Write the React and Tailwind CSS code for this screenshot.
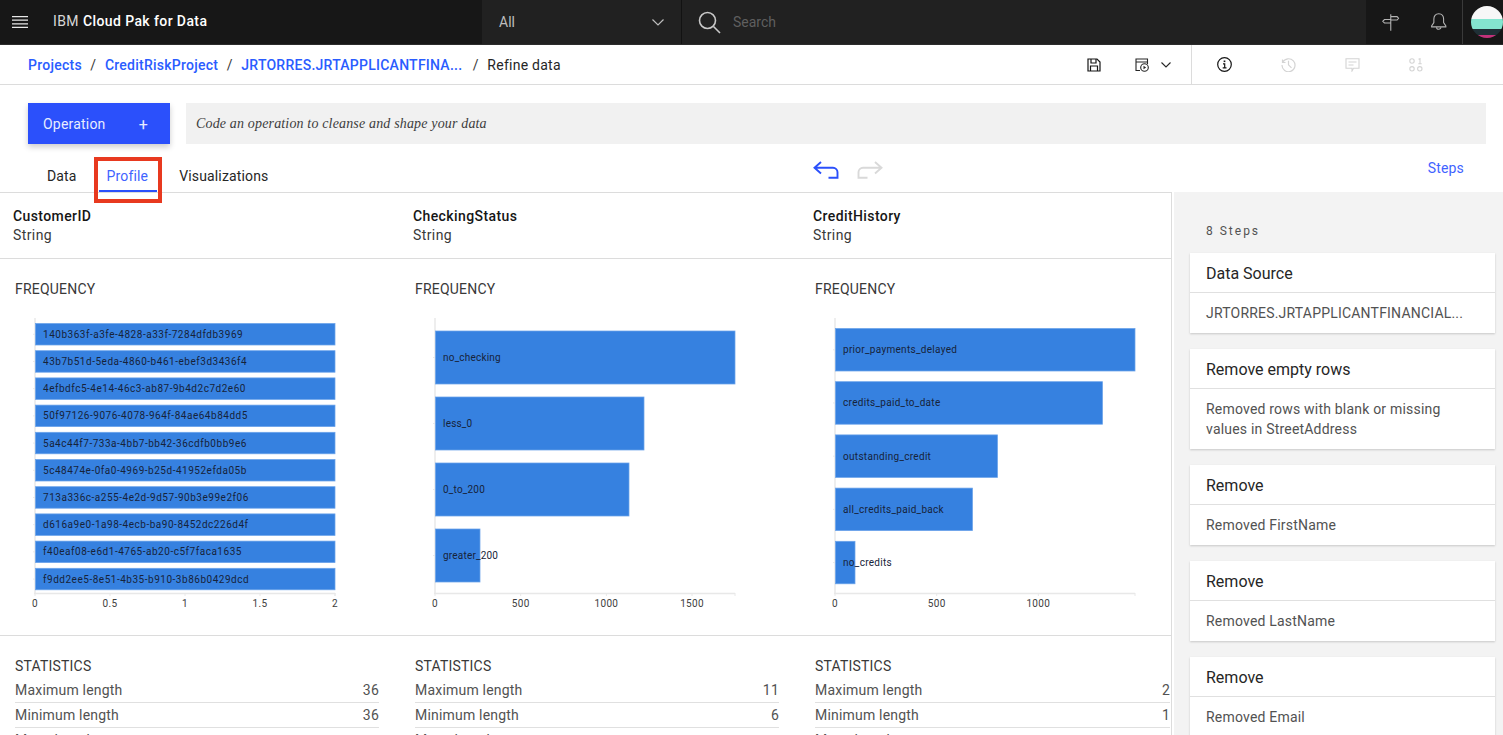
const frequencyCharts = [
  {
    name: 'CustomerID',
    ticks: [['0', 0], ['0.5', 75], ['1', 150], ['1.5', 225], ['2', 300]],
    bars: [
      ['140b363f-a3fe-4828-a33f-7284dfdb3969', 300],
      ['43b7b51d-5eda-4860-b461-ebef3d3436f4', 300],
      ['4efbdfc5-4e14-46c3-ab87-9b4d2c7d2e60', 300],
      ['50f97126-9076-4078-964f-84ae64b84dd5', 300],
      ['5a4c44f7-733a-4bb7-bb42-36cdfb0bb9e6', 300],
      ['5c48474e-0fa0-4969-b25d-41952efda05b', 300],
      ['713a336c-a255-4e2d-9d57-90b3e99e2f06', 300],
      ['d616a9e0-1a98-4ecb-ba90-8452dc226d4f', 300],
      ['f40eaf08-e6d1-4765-ab20-c5f7faca1635', 300],
      ['f9dd2ee5-8e51-4b35-b910-3b86b0429dcd', 300],
    ],
    top: 323.5,
    pitch: 27.2,
    barHeight: 21.5,
    labelSpacing: 0.52,
    stats: [36, 36],
  },
  {
    name: 'CheckingStatus',
    ticks: [['0', 0], ['500', 85.7], ['1000', 171.4], ['1500', 257]],
    bars: [
      ['no_checking', 300],
      ['less_0', 209],
      ['0_to_200', 194],
      ['greater_200', 45],
    ],
    top: 331,
    pitch: 66,
    barHeight: 53,
    labelSpacing: 0.2,
    stats: [11, 6],
  },
  {
    name: 'CreditHistory',
    ticks: [['0', 0], ['500', 101.7], ['1000', 203.3]],
    bars: [
      ['prior_payments_delayed', 300],
      ['credits_paid_to_date', 267.5],
      ['outstanding_credit', 162.5],
      ['all_credits_paid_back', 137.5],
      ['no_credits', 20],
    ],
    top: 328.5,
    pitch: 53.2,
    barHeight: 42.5,
    labelSpacing: 0.3,
    stats: [2, 1],
  },
];

const steps = [
  { title: 'Data Source', lines: ['JRTORRES.JRTAPPLICANTFINANCIAL...'] },
  { title: 'Remove empty rows', lines: ['Removed rows with blank or missing', 'values in StreetAddress'] },
  { title: 'Remove', lines: ['Removed FirstName'] },
  { title: 'Remove', lines: ['Removed LastName'] },
  { title: 'Remove', lines: ['Removed Email'] },
];

// svg sits at page y 310, so bar positions are page y minus this
const CHART_TOP = 310;

function BarChart({ chart }) {
  return (
    <svg width="400" height="305" className="block font-['Roboto',sans-serif]">
      <line x1="35" y1="8" x2="35" y2="283.5" stroke="#e8e8e8" strokeWidth="1.5" />
      <line x1="34" y1="283.5" x2="335" y2="283.5" stroke="#e8e8e8" strokeWidth="1.5" />
      {chart.bars.map(([label, width], i) => {
        const y = chart.top - CHART_TOP + i * chart.pitch;
        return (
          <g key={label}>
            <line x1="33" x2="35" y1={y + chart.barHeight / 2} y2={y + chart.barHeight / 2} stroke="#e8e8e8" />
            <rect x="35.5" y={y} width={width - 0.5} height={chart.barHeight} fill="#3681e0" stroke="#6ba3ea" strokeWidth="0.75" />
            <text x="43" y={y + chart.barHeight / 2 + 3.5} fontSize="10" letterSpacing={chart.labelSpacing} fill="#16233a">
              {label}
            </text>
          </g>
        );
      })}
      {chart.ticks.map(([label, x]) => (
        <g key={label}>
          <line x1={35 + x} x2={35 + x} y1="283" y2="286" stroke="#e8e8e8" />
          <text x={35 + x} y="296.5" fontSize="10" letterSpacing="0.3" textAnchor="middle" fill="#3d3d3d">
            {label}
          </text>
        </g>
      ))}
      <line x1="335" x2="335" y1="283" y2="286" stroke="#e8e8e8" />
    </svg>
  );
}

function StatRow({ label, value }) {
  return (
    <div className="flex h-[25px] items-center justify-between border-b border-[#e0e0e0] pt-px text-[14px] tracking-[0.2px] text-[#525252]">
      <span>{label}</span>
      <span>{value}</span>
    </div>
  );
}

function StepCard({ step }) {
  return (
    <div className="mb-4 w-[305px] bg-white shadow-[0_1px_2px_rgba(0,0,0,0.18)]">
      <div className="flex h-[40px] items-center border-b border-[#e0e0e0] px-4 pt-[2px] text-[16px] text-[#262626]">{step.title}</div>
      <div className="px-4 py-[10px] text-[14px] leading-[20px] tracking-[0.2px] text-[#525252]">
        {step.lines.map((line) => (
          <div key={line}>{line}</div>
        ))}
      </div>
    </div>
  );
}

function TopBar() {
  return (
    <header className="flex h-[45px] shrink-0 border-b border-[#2c2c2c] bg-[#212121] text-[14px]">
      <div className="flex w-[482px] items-center bg-[#171717]">
        <svg width="16" height="12" viewBox="0 0 16 12" className="ml-3" stroke="#e8e8e8" strokeWidth="1.2">
          <path d="M0 .6h16M0 4.2h16M0 7.8h16M0 11.4h16" />
        </svg>
        <span className="ml-[25px] -mt-px tracking-[0.4px] text-[#d8d8d8]">IBM</span>
        <span className="ml-1 -mt-px font-medium tracking-[0.4px] text-white">Cloud Pak for Data</span>
      </div>
      <div className="flex w-[200px] items-center justify-between border-r border-[#121212] pl-[17px] pr-[17px] text-[#bdbdbd]">
        <span>All</span>
        <svg width="12" height="7" viewBox="0 0 12 7" fill="none" stroke="#bdbdbd" strokeWidth="1.2">
          <path d="M.5.5 6 6l5.500-5.500" />
        </svg>
      </div>
      <div className="flex flex-1 items-center pl-4">
        <svg width="23" height="23" viewBox="0 0 23 23" fill="none" stroke="#c8c8c8" strokeWidth="1.6">
          <circle cx="9.500" cy="9.500" r="8" />
          <path d="m15.500 15.500 6.500 6.500" />
        </svg>
        <span className="ml-3 text-[#5f5f5f]">Search</span>
      </div>
      <div className="flex w-[137px] items-center bg-[#171717]">
        <svg width="18" height="18" viewBox="0 0 18 18" className="ml-4" fill="none" stroke="#b5b5b5" strokeWidth="1.1">
          <path d="M9 1v17M9 3.500h6.500L17 5.200l-1.500 1.800H9M9 6.500H2.500L.8 8.300l1.700 1.700H9" />
        </svg>
        <svg width="20" height="20" viewBox="0 0 20 20" className="ml-[29px]" fill="none" stroke="#b5b5b5" strokeWidth="1.1">
          <path d="M10 1.500c-3.500 0-5 2.700-5 5.500v3.500L2.700 14v1h14.600v-1L15 10.500V7c0-2.800-1.500-5.500-5-5.500Z" />
          <path d="M7.800 15.300a2.200 2.200 0 0 0 4.400 0" />
        </svg>
        <div className="ml-[14px] flex h-full items-center border-l border-[#3a3a3a] pl-2">
          <div className="flex h-8 w-8 flex-col overflow-hidden rounded-full">
            <div className="h-[13px] bg-[#f7f7f7]" />
            <div className="h-[10px] bg-[#84e5cf]" />
            <div className="h-[6px] bg-[#1f3036]" />
            <div className="h-[3px] bg-[#c2327a]" />
          </div>
        </div>
      </div>
    </header>
  );
}

function Breadcrumb() {
  return (
    <div className="flex h-[40px] shrink-0 items-center border-b border-[#dcdcdc] pl-7 text-[14px] tracking-[0.25px]">
      <a className="pt-[2px] font-medium text-[#2a5cff]">Projects</a>
      <span className="mx-[8.500px] pt-[2px] text-[#393939]">/</span>
      <a className="pt-[2px] font-medium text-[#2a5cff]">CreditRiskProject</a>
      <span className="mx-[8.500px] pt-[2px] text-[#393939]">/</span>
      <a className="pt-[2px] font-medium text-[#2a5cff]">JRTORRES.JRTAPPLICANTFINA...</a>
      <span className="mx-[8.500px] pl-[2px] pt-[2px] text-[#393939]">/</span>
      <span className="pt-[2px] text-[#262626]">Refine data</span>
      <div className="ml-auto flex h-full items-center pr-[55px]">
        <svg width="14" height="14" viewBox="0 0 14 14" fill="none" stroke="#161616" strokeWidth="1.2">
          <path d="M1 1h9l3 3v9H1Z" />
          <path d="M4 1v4h5V1M3.500 13V8h7v5" />
        </svg>
        <svg width="14" height="14" viewBox="0 0 14 14" className="ml-[34px]" fill="none" stroke="#262626" strokeWidth="1.1">
          <path d="M5 12.500H1V1h11.500v5M1 4h11.500" />
          <circle cx="9.500" cy="9.500" r="3.800" />
          <path d="M8.500 7.800v3.400l2.600-1.700Z" fill="#262626" stroke="none" />
        </svg>
        <svg width="10" height="6" viewBox="0 0 10 6" className="ml-[12px]" fill="none" stroke="#262626" strokeWidth="1.1">
          <path d="m.5.500 4.500 4.500L9.500.5" />
        </svg>
        <div className="ml-[20px] flex h-full items-center border-l border-[#dcdcdc]">
          <div className="flex w-[64px] justify-center pl-[1px]">
            <svg width="15" height="15" viewBox="0 0 15 15" fill="none" stroke="#161616" strokeWidth="1.2">
              <circle cx="7.500" cy="7.500" r="6.800" />
              <path d="M6 6.800h1.700v4M5.700 10.900h3.800" />
              <path d="M7.500 3.500v1.600" strokeWidth="1.700" />
            </svg>
          </div>
          <div className="flex w-[64px] justify-center">
            <svg width="15" height="15" viewBox="0 0 15 15" fill="none" stroke="#d4d4d4" strokeWidth="1.2">
              <path d="M1.500 2.500v3h3M1.700 5.300A6.500 6.500 0 1 1 1 8" />
              <path d="M7.500 3.800v4l3 3" />
            </svg>
          </div>
          <div className="flex w-[64px] justify-center">
            <svg width="15" height="14" viewBox="0 0 15 14" fill="none" stroke="#d4d4d4" strokeWidth="1.100">
              <path d="M1 .7h13v9.600H8.500L7 13v-2.700H1Z" />
              <path d="M3.500 4h8M3.500 7h5" />
            </svg>
          </div>
          <div className="flex w-[64px] justify-center">
            <svg width="14" height="14" viewBox="0 0 14 14" fill="none" stroke="#d4d4d4" strokeWidth="1.100">
              <circle cx="3" cy="3" r="2.200" />
              <circle cx="3" cy="10.800" r="2.200" />
              <circle cx="10.800" cy="10.800" r="2.200" />
              <path d="M9.500 1.300 11 .7v5M9.300 5.700h3.400" />
            </svg>
          </div>
        </div>
      </div>
    </div>
  );
}

export default function App() {
  return (
    <div className="flex h-[735px] w-[1503px] flex-col overflow-hidden bg-white font-['Roboto',sans-serif]">
      <TopBar />
      <Breadcrumb />

      {/* Operation bar */}
      <div className="mt-[18px] flex shrink-0 pl-7 pr-[17px]">
        <button className="flex h-[41px] w-[142px] items-center justify-between bg-[#2b50fb] pl-[15px] pr-[22px] pt-[2px] text-[14px] tracking-[0.2px] text-[#e8ecff] shadow-[0_3px_6px_rgba(0,0,0,0.2)]">
          Operation
          <span className="text-[16px] leading-none">+</span>
        </button>
        <div className="ml-4 flex h-[41px] flex-1 items-center bg-[#f1f1f1] pl-[10px] font-['Liberation_Serif',serif] text-[14px] italic tracking-[0.16px] text-[#3d3d3d]">
          Code an operation to cleanse and shape your data
        </div>
      </div>

      {/* Tabs */}
      <div className="relative mt-[13px] flex h-[35px] w-full shrink-0 items-center text-[14px] tracking-[0.15px]">
        <span className="ml-[47px] mt-[4px] text-[#262626]">Data</span>
        <span className="ml-[30px] mt-[4px] text-[#3f63ff]">Profile</span>
        <span className="ml-[31px] mt-[4px] text-[#262626]">Visualizations</span>
        <svg width="26" height="18" viewBox="0 0 26 18" className="ml-[545px] -mt-[9px]" fill="none" stroke="#2b50fb" strokeWidth="1.900">
          <path d="M8 1 1.500 6.800 8 12.500M1.500 6.800h18.500a4.500 4.500 0 0 1 4.500 4.500v5.400h-9" />
        </svg>
        <svg width="26" height="18" viewBox="0 0 26 18" className="ml-[18px] -mt-[9px]" fill="none" stroke="#d9d9d9" strokeWidth="1.900">
          <path d="M18 1l6.500 5.800L18 12.500M24.500 6.800H6A4.500 4.500 0 0 0 1.500 11.300v5.400h9" />
        </svg>
        <a className="ml-auto mr-[39px] -mt-[12px] text-[#3f63ff]">Steps</a>
        {/* highlight box drawn over the Profile tab */}
        <div className="absolute left-[94px] top-0 h-[46px] w-[68px] border-[4px] border-[#e8391f]">
          <div className="absolute bottom-[7px] left-px right-px h-[2px] bg-[#2b50fb]" />
        </div>
      </div>

      <div className="flex min-h-0 flex-1">
        {/* Profile columns */}
        <div className="w-[1172px] shrink-0 border-r border-t border-[#dcdcdc]">
          <div className="flex h-[66px] border-b border-[#dcdcdc] pt-[14px] text-[14px] leading-[19px] tracking-[0.4px]">
            {frequencyCharts.map((chart) => (
              <div key={chart.name} className="w-[400px] shrink-0 pl-[13px] last:w-[371px]">
                <div className="font-medium text-[#161616]">{chart.name}</div>
                <div className="text-[#393939]">String</div>
              </div>
            ))}
          </div>

          <div className="flex h-[377px] border-b border-[#dcdcdc] pt-[22px]">
            {frequencyCharts.map((chart) => (
              <div key={chart.name} className="w-[400px] shrink-0 last:w-[370px] last:overflow-hidden">
                <div className="h-[16px] pl-[15px] text-[14px] leading-[16px] tracking-[0.2px] text-[#393939]">FREQUENCY</div>
                <div className="mt-[13px]">
                  <BarChart chart={chart} />
                </div>
              </div>
            ))}
          </div>

          <div className="flex pt-[22px]">
            {frequencyCharts.map((chart, i) => (
              <div key={chart.name} className={i === 2 ? 'ml-[15px] w-[355px]' : 'ml-[15px] mr-[21px] w-[364px]'}>
                <div className="mb-1 h-[16px] text-[14px] leading-[16px] tracking-[0.2px] text-[#393939]">STATISTICS</div>
                <StatRow label="Maximum length" value={chart.stats[0]} />
                <StatRow label="Minimum length" value={chart.stats[1]} />
                <StatRow label="Mean length" value="" />
              </div>
            ))}
          </div>
        </div>

        {/* Steps panel */}
        <div className="ml-[2px] flex-1 bg-[#f3f3f3] pl-4 pt-[30px]">
          <div className="mb-[15px] h-[16px] pl-4 pt-px text-[12px] leading-[16px] tracking-[2px] text-[#525252]">8 Steps</div>
          {steps.map((step, i) => (
            <StepCard key={i} step={step} />
          ))}
        </div>
      </div>
    </div>
  );
}
